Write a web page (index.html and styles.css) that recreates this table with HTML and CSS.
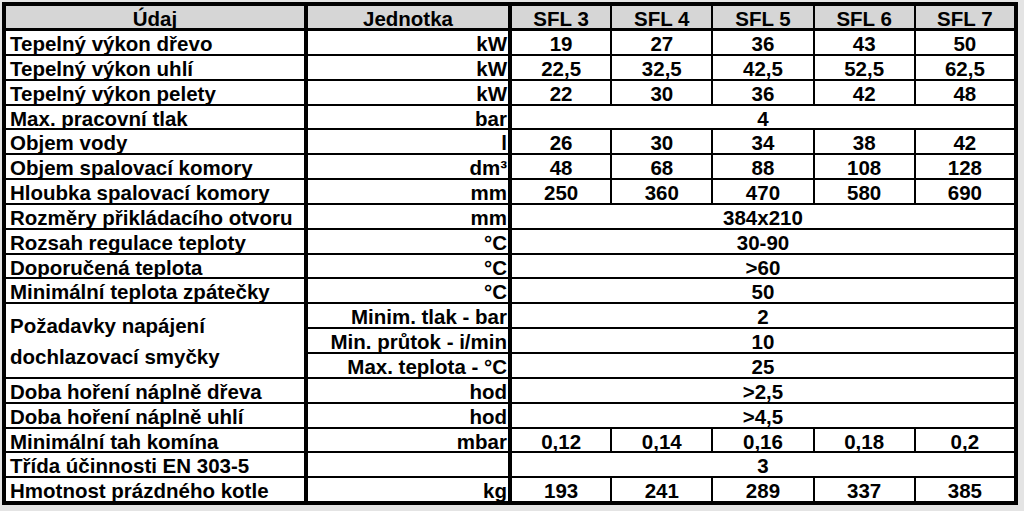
FILE: index.html
```html
<!DOCTYPE html>
<html lang="cs">
<head>
<meta charset="utf-8">
<title>Technické údaje SFL</title>
<link rel="stylesheet" href="styles.css">
</head>
<body>
<table class="spec">
  <colgroup>
    <col class="c-name"><col class="c-unit">
    <col class="c-val"><col class="c-val"><col class="c-val"><col class="c-val"><col class="c-val">
  </colgroup>
  <thead>
    <tr class="head">
      <th class="name-h">Údaj</th><th class="unit-h">Jednotka</th>
      <th>SFL 3</th><th>SFL 4</th><th>SFL 5</th><th>SFL 6</th><th>SFL 7</th>
    </tr>
  </thead>
  <tbody>
    <tr><td class="name">Tepelný výkon dřevo</td><td class="unit">kW</td><td>19</td><td>27</td><td>36</td><td>43</td><td>50</td></tr>
    <tr><td class="name">Tepelný výkon uhlí</td><td class="unit">kW</td><td>22,5</td><td>32,5</td><td>42,5</td><td>52,5</td><td>62,5</td></tr>
    <tr><td class="name">Tepelný výkon pelety</td><td class="unit">kW</td><td>22</td><td>30</td><td>36</td><td>42</td><td>48</td></tr>
    <tr><td class="name">Max. pracovní tlak</td><td class="unit">bar</td><td colspan="5">4</td></tr>
    <tr><td class="name">Objem vody</td><td class="unit">l</td><td>26</td><td>30</td><td>34</td><td>38</td><td>42</td></tr>
    <tr><td class="name">Objem spalovací komory</td><td class="unit">dm³</td><td>48</td><td>68</td><td>88</td><td>108</td><td>128</td></tr>
    <tr><td class="name">Hloubka spalovací komory</td><td class="unit">mm</td><td>250</td><td>360</td><td>470</td><td>580</td><td>690</td></tr>
    <tr><td class="name">Rozměry přikládacího otvoru</td><td class="unit">mm</td><td colspan="5">384x210</td></tr>
    <tr><td class="name">Rozsah regulace teploty</td><td class="unit">°C</td><td colspan="5">30-90</td></tr>
    <tr><td class="name">Doporučená teplota</td><td class="unit">°C</td><td colspan="5">&gt;60</td></tr>
    <tr><td class="name">Minimální teplota zpátečky</td><td class="unit">°C</td><td colspan="5">50</td></tr>
    <tr><td class="name multi" rowspan="3">Požadavky napájení<br>dochlazovací smyčky</td><td class="unit">Minim. tlak - bar</td><td colspan="5">2</td></tr>
    <tr><td class="unit">Min. průtok - i/min</td><td colspan="5">10</td></tr>
    <tr><td class="unit">Max. teplota - °C</td><td colspan="5">25</td></tr>
    <tr><td class="name">Doba hoření náplně dřeva</td><td class="unit">hod</td><td colspan="5">&gt;2,5</td></tr>
    <tr><td class="name">Doba hoření náplně uhlí</td><td class="unit">hod</td><td colspan="5">&gt;4,5</td></tr>
    <tr><td class="name">Minimální tah komína</td><td class="unit">mbar</td><td>0,12</td><td>0,14</td><td>0,16</td><td>0,18</td><td>0,2</td></tr>
    <tr><td class="name">Třída účinnosti EN 303-5</td><td class="unit"></td><td colspan="5">3</td></tr>
    <tr><td class="name">Hmotnost prázdného kotle</td><td class="unit">kg</td><td>193</td><td>241</td><td>289</td><td>337</td><td>385</td></tr>
  </tbody>
</table>
</body>
</html>
```

FILE: styles.css
```css
html, body {
  margin: 0;
  padding: 0;
  background: #e4e4e4;
}
body {
  padding: 2px 0 0 2px;
}
.spec {
  border-collapse: collapse;
  table-layout: fixed;
  width: 1012px;
  font-family: "Liberation Sans", Arial, sans-serif;
  font-weight: bold;
  font-size: 20.5px;
  color: #000;
  background: #fff;
  border: 4px solid #000;
}
.c-name { width: 302px; }
.c-unit { width: 204px; }
.c-val { width: 101.2px; }
.spec th, .spec td {
  border: 2px solid #000;
  padding: 3px 2px 0;
  height: 19.85px;
  line-height: 19.85px;
  text-align: center;
  white-space: nowrap;
  overflow: hidden;
}
.spec th {
  background: #d6d6d6;
  font-weight: bold;
  border-bottom: 3px solid #000;
  height: 19px;
  line-height: 19px;
}
.spec .name, .spec .name-h {
  border-right: 4px solid #000;
}
.spec .unit, .spec .unit-h {
  border-right: 4px solid #000;
}
.spec td.name {
  text-align: left;
  padding-left: 4px;
}
.spec td.unit {
  text-align: right;
  padding-right: 1px;
}
.spec td.multi {
  padding-top: 0;
  line-height: 31px;
}
```
